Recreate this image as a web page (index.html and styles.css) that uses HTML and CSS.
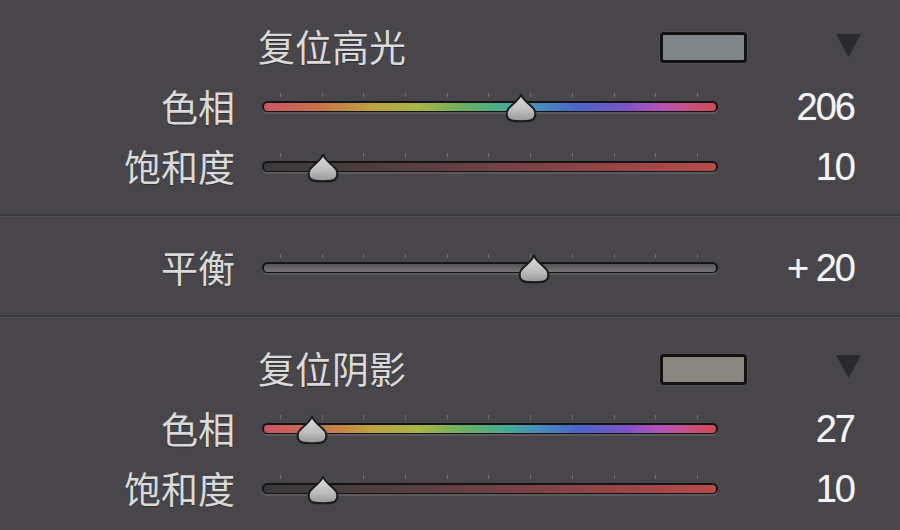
FILE: index.html
```html
<!DOCTYPE html>
<html lang="zh">
<head>
<meta charset="utf-8">
<link rel="stylesheet" href="styles.css">
</head>
<body>
<div class="panel">
  <svg width="0" height="0" class="defs">
    <defs>
      <linearGradient id="thumbGrad" x1="0" y1="0" x2="0" y2="1">
        <stop offset="0" stop-color="#dedede"/>
        <stop offset="0.6" stop-color="#bdbdbd"/>
        <stop offset="1" stop-color="#969696"/>
      </linearGradient>
      <symbol id="thumb" viewBox="0 0 34 30">
        <path d="M17 1.5 C19 6.5 22 9 27 13 C32 17 32.5 22.5 29.5 26 C27.5 28.3 24 28.3 17 28.3 C10 28.3 6.5 28.3 4.5 26 C1.5 22.5 2 17 7 13 C12 9 15 6.5 17 1.5 Z" fill="url(#thumbGrad)" stroke="#1b1b1b" stroke-width="2" stroke-linejoin="round"/>
      </symbol>
    </defs>
  </svg>

  <section class="group group-first">
    <div class="header">
      <div class="title">复位高光</div>
      <div class="swatch swatch-high"></div>
      <div></div>
      <svg class="tri" viewBox="0 0 27 25"><polygon points="1,1 26,1 13.5,24" fill="#2a292b"/></svg>
    </div>
    <div class="row">
      <div class="label">色相</div>
      <div class="slider">
        <div class="ticks"><i></i><i></i><i></i><i></i><i></i><i></i><i></i><i></i><i></i><i></i><i></i></div>
        <div class="track hue"></div>
        <svg class="thumb" style="left:56.8%"><use href="#thumb"/></svg>
      </div>
      <div class="value">206</div>
    </div>
    <div class="row">
      <div class="label">饱和度</div>
      <div class="slider">
        <div class="ticks"><i></i><i></i><i></i><i></i><i></i><i></i><i></i><i></i><i></i><i></i><i></i></div>
        <div class="track sat"></div>
        <svg class="thumb" style="left:13.4%"><use href="#thumb"/></svg>
      </div>
      <div class="value">10</div>
    </div>
  </section>

  <div class="sep"></div>

  <section class="group group-mid">
    <div class="row">
      <div class="label">平衡</div>
      <div class="slider">
        <div class="ticks"><i></i><i></i><i></i><i></i><i></i><i></i><i></i><i></i><i></i><i></i><i></i></div>
        <div class="track bal"></div>
        <svg class="thumb" style="left:59.6%"><use href="#thumb"/></svg>
      </div>
      <div class="value">+ 20</div>
    </div>
  </section>

  <div class="sep"></div>

  <section class="group group-last">
    <div class="header">
      <div class="title">复位阴影</div>
      <div class="swatch swatch-shadow"></div>
      <div></div>
      <svg class="tri" viewBox="0 0 27 25"><polygon points="1,1 26,1 13.5,24" fill="#2a292b"/></svg>
    </div>
    <div class="row">
      <div class="label">色相</div>
      <div class="slider">
        <div class="ticks"><i></i><i></i><i></i><i></i><i></i><i></i><i></i><i></i><i></i><i></i><i></i></div>
        <div class="track hue"></div>
        <svg class="thumb" style="left:11%"><use href="#thumb"/></svg>
      </div>
      <div class="value">27</div>
    </div>
    <div class="row">
      <div class="label">饱和度</div>
      <div class="slider">
        <div class="ticks"><i></i><i></i><i></i><i></i><i></i><i></i><i></i><i></i><i></i><i></i><i></i></div>
        <div class="track sat"></div>
        <svg class="thumb" style="left:13.4%"><use href="#thumb"/></svg>
      </div>
      <div class="value">10</div>
    </div>
  </section>
</div>
</body>
</html>
```

FILE: styles.css
```css
html, body {
  margin: 0;
  padding: 0;
  background: #48464a;
}

body {
  width: 900px;
  height: 530px;
  overflow: hidden;
  font-family: "Noto Sans CJK SC", "Noto Sans", sans-serif;
  color: #dcdcdc;
}

.defs {
  position: absolute;
  width: 0;
  height: 0;
}

.panel {
  display: flex;
  flex-direction: column;
}

.group-first {
  padding: 17px 0 17px;
}

.group-mid {
  padding: 21px 0 17px;
}

.group-last {
  padding: 21px 0 0;
}

.sep {
  height: 0;
  border-top: 2px solid #39383b;
  border-bottom: 1px solid #535155;
}

.header {
  height: 60px;
  display: grid;
  grid-template-columns: 402px 87px 88px 27px;
  align-items: center;
  padding-left: 258px;
}

.title {
  font-size: 37px;
  line-height: 1;
  color: #dadada;
  text-shadow: 0 1px 1px rgba(0, 0, 0, 0.35);
  margin-top: -2px;
}

.swatch {
  height: 31px;
  box-sizing: border-box;
  border: 3px solid #121212;
  border-radius: 4px;
  box-shadow: 0 0 0 1px rgba(255, 255, 255, 0.06);
}

.swatch-high {
  background: #7f8689;
}

.swatch-shadow {
  background: #8b867f;
}

.tri {
  width: 27px;
  height: 25px;
  display: block;
  margin-top: -4px;
}

.group-last .tri {
  margin-top: -6px;
}

.row {
  height: 60px;
  display: grid;
  grid-template-columns: 235px 456px 111px;
  column-gap: 27px;
  align-items: center;
}

.row .slider {
  grid-column: 2;
}

.label {
  font-size: 37px;
  line-height: 1;
  text-align: right;
  color: #dadada;
  text-shadow: 0 1px 1px rgba(0, 0, 0, 0.35);
  margin-top: -2px;
}

.value {
  grid-column: 3;
  font-family: "Liberation Sans", Arial, sans-serif;
  font-size: 38px;
  letter-spacing: -2px;
  line-height: 1;
  text-align: right;
  color: #f4f4f4;
  padding-right: 2px;
  text-shadow: 0 0 1px rgba(255, 255, 255, 0.4);
}

.slider {
  position: relative;
  height: 60px;
  box-sizing: border-box;
  padding-top: 16px;
  display: flex;
  flex-direction: column;
}

.ticks {
  height: 4px;
  margin: 0 20px 4px 18px;
  display: flex;
  justify-content: space-between;
}

.ticks i {
  width: 1px;
  height: 4px;
  background: #747275;
}

.track {
  height: 11px;
  box-sizing: border-box;
  border: 2px solid #141414;
  border-bottom-width: 1px;
  border-radius: 6px;
  box-shadow: 0 2px 0 #5c5a5d;
}

.hue {
  background: linear-gradient(to right,
    #cc5466 0%,
    #c7724a 12%,
    #bda240 24%,
    #a9b548 34%,
    #6cae62 44%,
    #46a996 54%,
    #4a86c0 62%,
    #4d62c8 70%,
    #7b55c6 80%,
    #b552b4 88%,
    #c95077 95%,
    #c94a52 100%);
}

.sat {
  background: linear-gradient(to right, #3a393a 0%, #5a3f40 35%, #8c4446 70%, #b64a4c 100%);
}

.bal {
  background: linear-gradient(to bottom, #555356 0%, #6b696c 60%, #747275 100%);
}

.thumb {
  position: absolute;
  top: 16px;
  width: 34px;
  height: 30px;
  transform: translateX(-50%);
  overflow: visible;
}
```
